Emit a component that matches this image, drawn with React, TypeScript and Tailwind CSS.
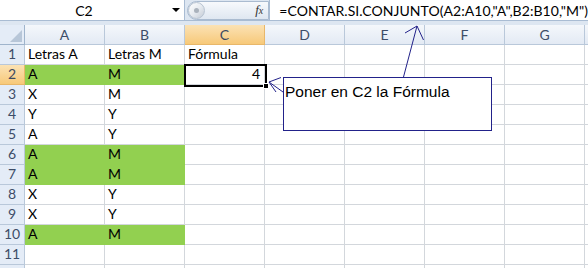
import React from 'react'

const cols = ['A', 'B', 'C', 'D', 'E', 'F', 'G']

type Row = { a?: string; b?: string; c?: string; green?: boolean }

const rows: Row[] = [
  { a: 'Letras A', b: 'Letras M', c: 'Fórmula' },
  { a: 'A', b: 'M', c: '4', green: true },
  { a: 'X', b: 'M' },
  { a: 'Y', b: 'Y' },
  { a: 'A', b: 'Y' },
  { a: 'A', b: 'M', green: true },
  { a: 'A', b: 'M', green: true },
  { a: 'X', b: 'Y' },
  { a: 'X', b: 'Y' },
  { a: 'A', b: 'M', green: true },
  {},
  {},
]

function FormulaBar() {
  return (
    <div className="flex h-[21px] bg-white border-b border-[#a9bcd3]">
      <div className="relative flex w-[188px] items-center justify-center border-r border-[#a9bcd3] text-[14px] text-black">
        <span className="-ml-[16px]">C2</span>
        <span className="absolute right-[4px] top-[8px] h-0 w-0 border-x-[4px] border-t-[4px] border-x-transparent border-t-black" />
      </div>
      <div className="flex w-[86px] items-center bg-[#dde6f1] pl-[2px]">
        <div className="flex h-[19px] flex-1 items-center rounded-l-full border border-[#aabbd0] bg-gradient-to-b from-[#f7f9fc] to-[#dfe7f1]">
          <div className="flex h-[17px] w-[17px] items-center justify-center rounded-full border border-[#b8c4d2] bg-gradient-to-br from-[#ffffff] via-[#e7ebf0] to-[#c5ccd6]">
            <div className="h-[5px] w-[5px] rounded-full bg-[#aab2bc]" />
          </div>
          <div className="flex-1" />
          <span className="pr-[5px] font-['Liberation_Serif',serif] text-[13px] italic text-[#333]">
            f<span className="text-[10px]">x</span>
          </span>
        </div>
      </div>
      <div className="flex flex-1 items-center border-l border-[#a9bcd3] pl-[9px] text-[14px] tracking-[0.05px] text-black">
        =CONTAR.SI.CONJUNTO(A2:A10,"A",B2:B10,"M")
      </div>
    </div>
  )
}

function HeaderRow() {
  return (
    <div className="flex h-[20px]">
      <div className="relative w-[25px] border-r border-b border-[#9fb4cc] bg-[#e4ecf7]">
        <svg className="absolute right-[2px] bottom-[2px]" width="12" height="12">
          <polygon points="12,0 12,12 0,12" fill="#b7c6d8" />
        </svg>
      </div>
      {cols.map((c) => (
        <div
          key={c}
          className={`flex w-[80px] items-center justify-center border-r border-b text-[14px] ${
            c === 'C'
              ? 'border-[#e8b76a] bg-gradient-to-b from-[#fbe2b4] to-[#f7c979] text-[#3d4a60]'
              : 'border-[#b9c8da] bg-gradient-to-b from-[#f4f7fb] to-[#e3eaf4] text-[#3d4d68]'
          }`}
        >
          {c}
        </div>
      ))}
      <div className="flex-1 border-b border-[#b9c8da] bg-gradient-to-b from-[#f4f7fb] to-[#e3eaf4]" />
    </div>
  )
}

function DataRow({ row, n }: { row: Row; n: number }) {
  const selected = n === 2
  const fill = row.green ? 'bg-[#92d050] border-[#92d050]' : 'bg-white border-[#d3d7dc]'
  return (
    <div className="flex h-[20px]">
      <div
        className={`flex w-[25px] items-end justify-center border-r border-b pb-[1px] text-[14px] leading-[18px] ${
          selected
            ? 'border-[#e8b76a] bg-gradient-to-b from-[#fbe2b4] to-[#f7c979] text-[#3d4a60]'
            : 'border-[#b9c8da] bg-[#e4ecf7] text-[#3d4d68]'
        }`}
      >
        {n <= 11 ? n : ''}
      </div>
      <div className={`flex w-[80px] items-end border-r border-b pb-[1px] pl-[3px] text-[14px] leading-[18px] text-black ${fill}`}>
        {row.a}
      </div>
      <div className={`flex w-[80px] items-end border-r border-b pb-[1px] pl-[3px] text-[14px] leading-[18px] text-black ${fill}`}>
        {row.b}
      </div>
      <div
        className={`flex w-[80px] items-end border-r border-b border-[#d3d7dc] bg-white pb-[1px] text-[14px] leading-[18px] text-black ${
          n === 2 ? 'justify-end pr-[4px]' : 'pl-[3px]'
        }`}
      >
        {row.c}
      </div>
      {[0, 1, 2, 3].map((i) => (
        <div key={i} className="w-[80px] border-r border-b border-[#d3d7dc] bg-white" />
      ))}
      <div className="flex-1 border-b border-[#d3d7dc] bg-white" />
    </div>
  )
}

export default function App() {
  return (
    <div className="relative h-[268px] w-[588px] overflow-hidden bg-white font-['Lato',sans-serif]">
      <FormulaBar />
      <div className="h-[4px] bg-[#dde6f1]" />
      <HeaderRow />
      {rows.map((r, i) => (
        <DataRow key={i} row={r} n={i + 1} />
      ))}

      {/* active cell C2 */}
      <div className="absolute left-[184px] top-[64px] h-[23px] w-[83px] border-[2px] border-black" />
      <div className="absolute left-[263px] top-[83px] h-[6px] w-[6px] border border-white bg-black" />

      {/* callout */}
      <div className="absolute left-[283px] top-[77px] h-[54px] w-[209px] border border-[#22228a] bg-white pl-[1px] pt-[5px] font-['Liberation_Sans',sans-serif] text-[15.5px] leading-[18px] text-black">
        Poner en C2 la Fórmula
      </div>

      <svg className="pointer-events-none absolute inset-0" width="588" height="268">
        <g stroke="#22228a" strokeWidth="1" fill="none">
          <line x1="403.5" y1="77" x2="417" y2="26" />
          <polyline points="405,33 417,26 423.5,40" />
          <line x1="283" y1="92" x2="269" y2="82" />
          <polyline points="281,77.5 269,82 276,92" />
        </g>
      </svg>
    </div>
  )
}
